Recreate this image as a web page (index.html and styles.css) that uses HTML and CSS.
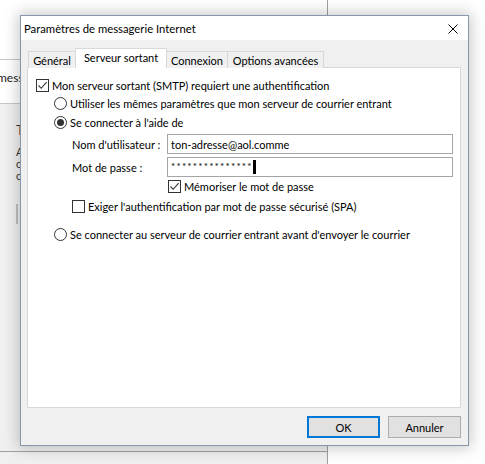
FILE: index.html
```html
<!DOCTYPE html>
<html lang="fr">
<head>
<meta charset="UTF-8">
<meta name="viewport" content="width=device-width, initial-scale=1.0">
<title>Paramètres de messagerie Internet</title>
<link rel="stylesheet" href="styles.css">
</head>
<body>
<div class="desktop">
    <!-- window behind the dialog -->
    <div class="back-win">
        <div class="back-top"></div>
        <div class="back-row"><span class="back-label">messagerie</span></div>
        <div class="back-body">
            <div class="back-title">T</div>
            <div class="back-line">A</div>
            <div class="back-line">c</div>
            <div class="back-line">c</div>
            <div class="back-bar"></div>
        </div>
        <div class="back-foot"></div>
    </div>

    <div class="dialog">
        <div class="titlebar">
            <span class="title">Paramètres de messagerie Internet</span>
            <svg class="close" width="10" height="10" viewBox="0 0 10 10">
                <path d="M0.5 0.5 L9.5 9.5 M9.5 0.5 L0.5 9.5" stroke="#000" stroke-width="1" fill="none"/>
            </svg>
        </div>
        <div class="client">
            <div class="tabs">
                <div class="tab t-general">Général</div>
                <div class="tab t-serveur active">Serveur sortant</div>
                <div class="tab t-connexion">Connexion</div>
                <div class="tab t-options">Options avancées</div>
            </div>
            <div class="panel">
                <div class="row r1">
                    <span class="check on"><svg width="11" height="11" viewBox="0 0 11 11"><path d="M1.5 5.5 L4.2 8.3 L9.6 2.2" stroke="#333" stroke-width="1.1" fill="none"/></svg></span>
                    <span>Mon serveur sortant (SMTP) requiert une authentification</span>
                </div>
                <div class="row r2 indent1">
                    <span class="radio"></span>
                    <span>Utiliser les mêmes paramètres que mon serveur de courrier entrant</span>
                </div>
                <div class="row r3 indent1">
                    <span class="radio on"></span>
                    <span>Se connecter à l'aide de</span>
                </div>
                <div class="row field r4 indent2">
                    <span class="field-label">Nom d'utilisateur :</span>
                    <span class="textbox">ton-adresse@aol.comme</span>
                </div>
                <div class="row field r5 indent2">
                    <span class="field-label">Mot de passe :</span>
                    <span class="textbox pwd"><span class="stars">***************</span><span class="caret"></span></span>
                </div>
                <div class="row r6 indent3">
                    <span class="check on"><svg width="11" height="11" viewBox="0 0 11 11"><path d="M1.5 5.5 L4.2 8.3 L9.6 2.2" stroke="#333" stroke-width="1.1" fill="none"/></svg></span>
                    <span>Mémoriser le mot de passe</span>
                </div>
                <div class="row r7 indent2">
                    <span class="check"></span>
                    <span>Exiger l'authentification par mot de passe sécurisé (SPA)</span>
                </div>
                <div class="row r8 indent1">
                    <span class="radio"></span>
                    <span>Se connecter au serveur de courrier entrant avant d'envoyer le courrier</span>
                </div>
            </div>
            <div class="buttons">
                <button class="btn default">OK</button>
                <button class="btn">Annuler</button>
            </div>
        </div>
    </div>
</div>
</body>
</html>
```

FILE: styles.css
```css
body {
    margin: 0;
    padding: 0;
    background-color: #fff;
    font-family: 'Lato', 'Noto Sans', sans-serif;
    font-size: 11px;
    color: #000;
    overflow: hidden;
}
.desktop {
    position: relative;
    width: 485px;
    height: 464px;
    overflow: hidden;
    background-color: #fff;
}

/* window in the background */
.back-win {
    position: absolute;
    left: -40px;
    top: 0;
    width: 367px;
    height: 464px;
    display: flex;
    flex-direction: column;
    background-color: #f0f0f0;
    border-right: 1px solid #a0a0a0;
}
.back-top {
    height: 59px;
    flex-shrink: 0;
    background-color: #fff;
    border-bottom: 1px solid #c8c8c8;
}
.back-row {
    height: 43px;
    flex-shrink: 0;
    background-color: #fff;
    border-bottom: 1px solid #c8c8c8;
    display: flex;
    align-items: center;
    color: #222;
    white-space: nowrap;
    font-size: 12px;
}
.back-label {
    margin-left: 37px;
    margin-top: -8px;
}
.back-body {
    flex: 1;
    padding: 17px 0 0 56px;
    color: #333;
}
.back-title {
    font-size: 14px;
    height: 20px;
    margin-bottom: 5px;
}
.back-line {
    font-size: 11px;
    height: 12px;
    line-height: 12px;
}
.back-bar {
    margin-top: 22px;
    width: 2px;
    height: 20px;
    background-color: #c0c0c0;
}
.back-foot {
    height: 12px;
    flex-shrink: 0;
    border-top: 1px solid #a0a0a0;
    background-color: #f0f0f0;
}

/* the dialog */
.dialog {
    position: absolute;
    left: 20px;
    top: 15px;
    width: 447px;
    height: 429px;
    border: 1px solid #8797ab;
    background-color: #f0f0f0;
    box-shadow: 0 0 14px 2px rgba(0, 0, 0, 0.22);
    display: flex;
    flex-direction: column;
}
.titlebar {
    height: 24px;
    flex-shrink: 0;
    background-color: #fff;
    display: flex;
    align-items: center;
    justify-content: space-between;
    padding: 0 10px 0 3px;
}
.title {
    font-size: 11.3px;
    margin-top: 1px;
}
.close {
    margin-top: 1px;
}
.client {
    flex: 1;
    display: flex;
    flex-direction: column;
    padding: 8px 7px 6px 6px;
}

/* tabs */
.tabs {
    display: flex;
    align-items: flex-end;
    height: 20px;
    flex-shrink: 0;
    padding-left: 1px;
    position: relative;
    z-index: 1;
    margin-bottom: -1px;
}
.tab {
    height: 15px;
    border: 1px solid #d9d9d9;
    border-bottom: none;
    background-color: #f0f0f0;
    display: flex;
    align-items: center;
    justify-content: center;
    margin-left: -1px;
    white-space: nowrap;
    padding-top: 1px;
}
.tab:first-child {
    margin-left: 0;
}
.tab.active {
    height: 19px;
    padding-top: 0;
    background-color: #fff;
    align-items: flex-start;
    line-height: 17px;
}
.t-general { width: 46px; }
.t-serveur { width: 90px; }
.t-connexion { width: 60px; }
.t-options { width: 95px; }

.panel {
    height: 341px;
    box-sizing: border-box;
    flex-shrink: 0;
    background-color: #fff;
    border: 1px solid #d9d9d9;
    padding: 8px 0 0 8px;
    display: flex;
    flex-direction: column;
}

/* rows */
.row {
    display: flex;
    align-items: center;
    height: 18px;
    white-space: nowrap;
}
.indent1 { padding-left: 18px; }
.indent2 { padding-left: 36px; }
.indent3 { padding-left: 132px; }
.r3 { margin-top: 1px; }
.r4 { margin-top: 3px; height: 20px; }
.r5 { margin-top: 3px; height: 20px; }
.r7 { margin-top: 2px; }
.r8 { margin-top: 10px; }

.check {
    width: 11px;
    height: 11px;
    border: 1px solid #333;
    background-color: #fff;
    margin-right: 3px;
    display: flex;
    flex-shrink: 0;
}
.radio {
    width: 11px;
    height: 11px;
    border: 1px solid #333;
    border-radius: 50%;
    background-color: #fff;
    margin-right: 3px;
    flex-shrink: 0;
    position: relative;
}
.radio.on::after {
    content: '';
    position: absolute;
    left: 2px;
    top: 2px;
    width: 7px;
    height: 7px;
    border-radius: 50%;
    background-color: #333;
}

.field-label {
    width: 95px;
    flex-shrink: 0;
}
.textbox {
    width: 281px;
    height: 18px;
    border: 1px solid #a5a5a5;
    background-color: #fff;
    padding-left: 3px;
    display: flex;
    align-items: center;
}
.stars {
    font-size: 10px;
    letter-spacing: 1.2px;
    margin-top: -2px;
}
.caret {
    display: inline-block;
    width: 3px;
    height: 14px;
    background-color: #000;
}

/* buttons */
.buttons {
    display: flex;
    justify-content: flex-end;
    gap: 8px;
    margin-top: 8px;
    flex-shrink: 0;
}
.btn {
    width: 73px;
    height: 22px;
    border: 1px solid #adadad;
    background-color: #e1e1e1;
    font-family: 'Lato', 'Noto Sans', sans-serif;
    font-size: 11px;
    color: #000;
    padding: 0;
}
.btn.default {
    border: 2px solid #0078d7;
}
```
